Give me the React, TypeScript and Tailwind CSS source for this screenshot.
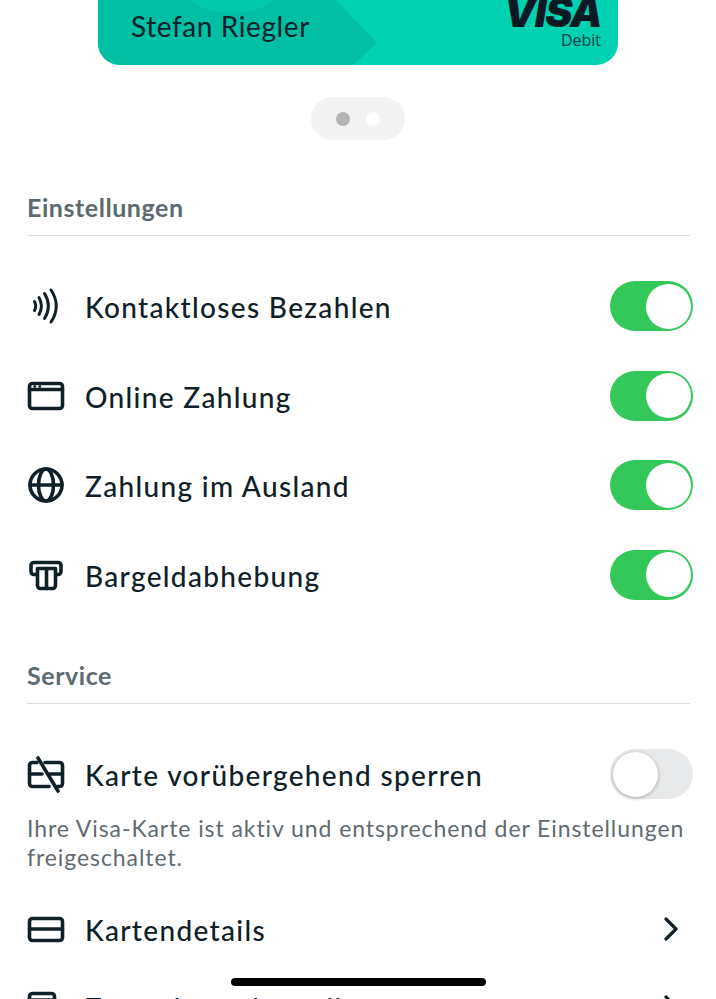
import type { ReactNode } from "react";

const ink = "#0f2029";

function Toggle({ on = true }: { on?: boolean }) {
  return (
    <div
      className={`flex h-[50px] w-[83px] shrink-0 items-center rounded-full p-[2.5px] ${
        on ? "justify-end bg-[#34c759]" : "justify-start bg-[#e8e9ea]"
      }`}
    >
      <div
        className={`size-[45px] rounded-full bg-white ${
          on ? "" : "shadow-[0_1px_4px_rgba(0,0,0,0.28)]"
        }`}
      />
    </div>
  );
}

function Icon({ children }: { children: ReactNode }) {
  return (
    <svg
      viewBox="0 0 38 38"
      className="size-[38px] shrink-0"
      fill="none"
      stroke={ink}
      strokeWidth="3.600"
      strokeLinecap="round"
      strokeLinejoin="round"
    >
      {children}
    </svg>
  );
}

const contactless = (
  <Icon>
    <path d="M7.500 14.500c1.600 3 1.600 6 0 9" strokeWidth="3" />
    <path d="M12 10.500c3.400 6 3.400 11 0 17" strokeWidth="3" />
    <path d="M17.500 6.500c5 8 5 17 0 25" strokeWidth="3" />
    <path d="M24 3c7 10 7 22 0 32" strokeWidth="3" />
  </Icon>
);

const browser = (
  <Icon>
    <rect x="2.500" y="6.500" width="33" height="25" rx="3" />
    <path d="M2.500 12.500h33" />
    <path d="M7.500 9.500h.5M12.500 9.500h.5" strokeWidth="2.400" />
  </Icon>
);

const globe = (
  <Icon>
    <circle cx="19" cy="19" r="16" />
    <path d="M3 19h32" />
    <ellipse cx="19" cy="19" rx="7.500" ry="16" />
  </Icon>
);

const atm = (
  <Icon>
    <path d="M8.500 18.500H7a3 3 0 0 1-3-3v-6a3 3 0 0 1 3-3h24a3 3 0 0 1 3 3v6a3 3 0 0 1-3 3h-1.500" />
    <path d="M10.500 12.500h18v17a3 3 0 0 1-3 3h-12a3 3 0 0 1-3-3z" />
    <path d="M19.500 12.500v20" />
  </Icon>
);

const cardOff = (
  <Icon>
    <path d="M10 7.500H5.500a3 3 0 0 0-3 3v18a3 3 0 0 0 3 3H22" />
    <path d="M18 7.500h14.500a3 3 0 0 1 3 3v18a3 3 0 0 1-3 3H30" />
    <path d="M2.500 19H15M23 19h12.500" />
    <path d="M11 3l20 33" />
  </Icon>
);

const card = (
  <Icon>
    <rect x="2.500" y="8.500" width="33" height="22" rx="3" />
    <path d="M2.500 19h33" />
  </Icon>
);

const addCard = (
  <Icon>
    <rect x="2.500" y="5.500" width="25" height="30" rx="3" />
    <path d="M2.500 12h25" />
  </Icon>
);

function Chevron() {
  return (
    <svg
      viewBox="0 0 14 24"
      className="mr-[12px] h-[24px] w-[14px] shrink-0"
      fill="none"
      stroke={ink}
      strokeWidth="3.200"
      strokeLinecap="round"
      strokeLinejoin="round"
    >
      <path d="M2 2l10 10L2 22" />
    </svg>
  );
}

function SectionTitle({ children }: { children: ReactNode }) {
  return (
    <div className="border-b border-[#dcdfe0] pb-[13px] text-[25px] leading-[30px] font-bold tracking-[0.55px] text-[#5d6a70]">
      {children}
    </div>
  );
}

function Label({ children }: { children: ReactNode }) {
  return (
    <span className="ml-[20px] flex-1 pt-[2px] text-[28px] leading-[40px] font-medium tracking-[1.33px] text-[#0f2029]">
      {children}
    </span>
  );
}

function Row({ icon, label, on }: { icon: ReactNode; label: string; on?: boolean }) {
  return (
    <div className="flex h-[50px] items-center">
      {icon}
      <Label>{label}</Label>
      <div className="-mr-[3px]">
        <Toggle on={on} />
      </div>
    </div>
  );
}

export default function App() {
  return (
    <div className="relative h-[999px] w-[716px] overflow-hidden bg-white font-['Lato',sans-serif]">
      <div className="relative mx-auto h-[65px] w-[520px] overflow-hidden rounded-b-[22px] bg-[#00d1b2]">
        <svg viewBox="0 0 520 65" className="absolute inset-0 size-full">
          <path d="M0 0H238L279 43 255 65H0z" fill="#00bfa5" />
          <ellipse cx="134" cy="-30" rx="60" ry="43" fill="#00c8ac" />
        </svg>
        <span className="absolute bottom-[21px] left-[33px] text-[28px] leading-[36px] tracking-[0.6px] text-[#0f2029]">
          Stefan Riegler
        </span>
        <span className="absolute top-[-6px] right-[17px] font-['Inter',sans-serif] text-[41px] leading-[36px] font-black italic tracking-[-1.5px] text-[#0a1a24]">
          VISA
        </span>
        <span className="absolute right-[17px] bottom-[16px] font-['Open_Sans',sans-serif] text-[16px] leading-[18px] text-[#0f3a40]">
          Debit
        </span>
      </div>

      <div className="mt-[32px] flex justify-center">
        <div className="flex h-[43px] w-[94px] items-center justify-center gap-[16px] rounded-full bg-[#f3f3f3]">
          <div className="size-[14px] rounded-full bg-[#b5b5b5]" />
          <div className="size-[14px] rounded-full bg-white" />
        </div>
      </div>

      <div className="pt-[52px] pr-[26px] pl-[27px]">
        <SectionTitle>Einstellungen</SectionTitle>
        <div className="mt-[45px] flex flex-col gap-[39.500px]">
          <Row icon={contactless} label="Kontaktloses Bezahlen" />
          <Row icon={browser} label="Online Zahlung" />
          <Row icon={globe} label="Zahlung im Ausland" />
          <Row icon={atm} label="Bargeldabhebung" />
        </div>

        <div className="mt-[60.500px]">
          <SectionTitle>Service</SectionTitle>
        </div>
        <div className="mt-[45px]">
          <Row icon={cardOff} label="Karte vorübergehend sperren" on={false} />
        </div>
        <p className="mt-[14.500px] text-[23px] leading-[29px] tracking-[0.92px] text-[#5f6b71]">
          Ihre Visa-Karte ist aktiv und entsprechend der Einstellungen freigeschaltet.
        </p>

        <div className="mt-[32.500px] flex h-[50px] items-center">
          {card}
          <Label>Kartendetails</Label>
          <Chevron />
        </div>
        <div className="mt-[28px] flex h-[50px] items-center">
          {addCard}
          <Label>Zusatzkarte bestellen</Label>
          <Chevron />
        </div>
      </div>

      <div className="absolute bottom-[13px] left-[231px] h-[8px] w-[255px] rounded-full bg-black" />
    </div>
  );
}
